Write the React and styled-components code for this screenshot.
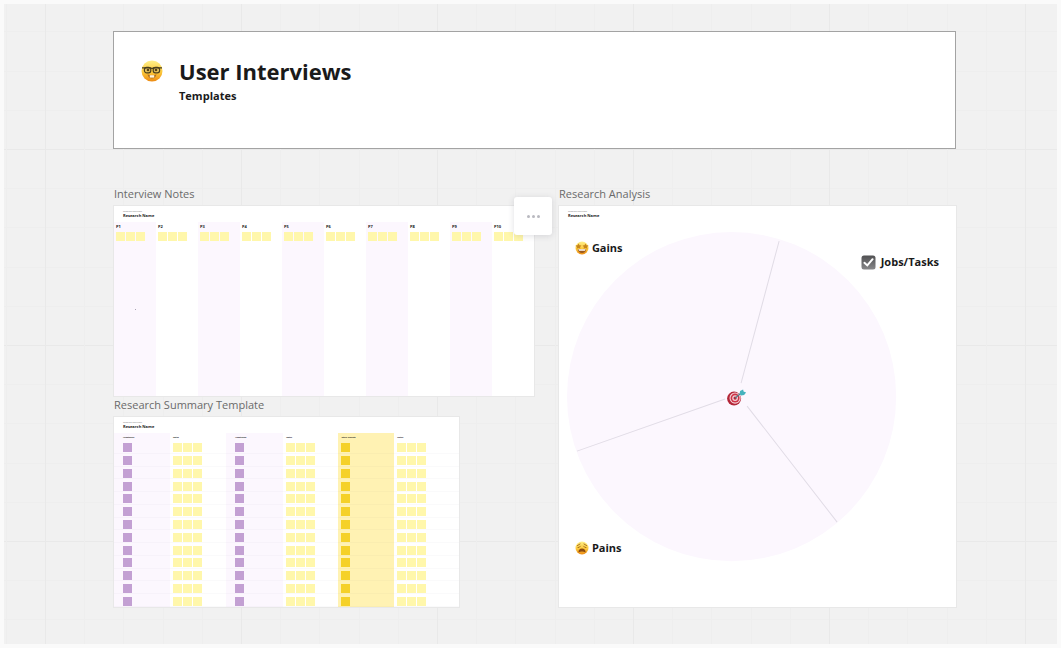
import React from "react";
import styled, { createGlobalStyle } from "styled-components";

const GlobalStyle = createGlobalStyle`
  * { box-sizing: border-box; }
  body {
    margin: 0;
    background: #fafafa;
    color: #1a1a1a;
    font-family: "Open Sans", "Noto Sans", sans-serif;
  }
`;

const major = "#e9e9e9";
const minor = "#eeeeee";
const gridStops = `${major} 0 1px, transparent 1px 39px, ${minor} 39px 40px, transparent 40px 78px, ${minor} 78px 79px, transparent 79px 118px, ${minor} 118px 119px, transparent 119px 157px, ${minor} 157px 158px, transparent 158px`;

const Board = styled.main`
  min-height: calc(100vh - 8px);
  margin: 4px;
  padding: 27px 101px 37px 109px;
  background-color: #f1f1f1;
  background-image:
    linear-gradient(to right, ${gridStops}),
    linear-gradient(to bottom, ${gridStops});
  background-size: 196px 196px;
  background-position: 41px 145px;
`;

const Banner = styled.header`
  display: flex;
  gap: 16px;
  min-height: 118px;
  padding: 24px 27px;
  background: #fff;
  border: 1px solid #a3a3a3;
`;

const BannerText = styled.div`
  display: flex;
  flex-direction: column;
`;

const Title = styled.h1`
  margin: 0;
  font-size: 22px;
  line-height: 30px;
  font-weight: 700;
`;

const Subtitle = styled.p`
  margin: 0;
  font-size: 11px;
  line-height: 20px;
  font-weight: 700;
`;

const BannerIcon = styled.span`
  display: flex;
  align-items: center;
  height: 30px;
`;

const Frames = styled.div`
  display: grid;
  grid-template-columns: 420fr 397fr;
  gap: 25px;
  padding: 36px 0 0 1px;
`;

const Column = styled.div`
  display: flex;
  flex-direction: column;
  min-width: 0;
`;

const FrameBlock = styled.section`
  position: relative;
  display: flex;
  flex-direction: column;
  flex-grow: ${(p) => (p.$grow ? 1 : 0)};
  width: ${(p) => p.$width || "100%"};
`;

const FrameTitle = styled.h2`
  margin: 0;
  font-size: 11px;
  line-height: 18px;
  padding-bottom: 3px;
  font-weight: 400;
  color: #6a6a6a;
`;

const Frame = styled.div`
  position: relative;
  display: flex;
  flex-direction: column;
  flex-grow: 1;
  background: #fff;
  box-shadow: 0 0 0 1px #e8e8e8;
`;

const FrameHead = styled.div`
  height: 16px;
  padding: 4px 9px 0;
`;

const Kicker = styled.p`
  margin: 0;
  font-size: 2px;
  line-height: 3px;
  color: #777;
`;

const ResearchName = styled.p`
  margin: 0;
  font-size: 4px;
  line-height: 5px;
  font-weight: 700;
`;

const Participants = styled.ul`
  display: grid;
  grid-template-columns: repeat(10, 1fr);
  flex-grow: 1;
  min-height: 174px;
  margin: 0;
  padding: 0;
  list-style: none;
`;

const Participant = styled.li`
  padding: 2px 2px 0;
  &:nth-child(odd) { background: #fcf7fe; }
`;

const ParticipantName = styled.h3`
  margin: 0 0 3px;
  font-size: 4px;
  line-height: 5px;
  font-weight: 700;
`;

const Stickies = styled.div`
  display: flex;
  gap: 1px;
`;

const noteColors = { pale: "#fff7ab", purple: "#c3a0d3", gold: "#f5d128" };

const Sticky = styled.span`
  display: block;
  width: 9px;
  height: 9px;
  background: ${(p) => noteColors[p.$tone]};
`;

const bandColors = { purple: "#fcf7fe", pale: "#ffffff", gold: "#fff2b3" };

const SummaryTable = styled.table`
  width: 100%;
  height: 174px;
  table-layout: fixed;
  border-collapse: collapse;
`;

const HeadCell = styled.th`
  width: ${(p) => p.$share};
  height: 8px;
  padding: 1px 0 0 ${(p) => p.$inset};
  background: ${(p) => bandColors[p.$tone]};
  text-align: left;
  font-size: 2px;
  line-height: 5px;
  font-weight: 700;
`;

const NoteCell = styled.td`
  padding: 1px 0 0 ${(p) => p.$inset};
  background: ${(p) => bandColors[p.$tone]};
  box-shadow: inset 0 -1px rgba(60, 60, 90, 0.025);
  vertical-align: middle;
`;

const Canvas = styled.div`
  position: relative;
  flex-grow: 1;
  padding: 10px 8px 45px;
`;

const Wheel = styled.svg`
  display: block;
  width: 86.4%;
  overflow: visible;
`;

const Pin = styled.div`
  position: absolute;
  top: ${(p) => p.$top};
  left: ${(p) => p.$left};
  display: flex;
  align-items: center;
  gap: ${(p) => p.$gap || "3px"};
  font-size: 11px;
  line-height: 16px;
  font-weight: 700;
  white-space: nowrap;
`;

const MenuButton = styled.button`
  position: absolute;
  top: 12px;
  right: -18px;
  display: flex;
  align-items: center;
  justify-content: center;
  gap: 2px;
  width: 38px;
  height: 38px;
  padding: 0;
  background: #fff;
  border: 0;
  border-radius: 3px;
  box-shadow: 0 1px 6px rgba(60, 60, 80, 0.16);
  cursor: pointer;
`;

const Dot = styled.span`
  width: 3px;
  height: 3px;
  border-radius: 50%;
  background: #b9b9c0;
`;

const Speck = styled.span`
  position: absolute;
  top: 54%;
  left: 5%;
  width: 1px;
  height: 1px;
  background: #a9a4b4;
`;

function FaceFill({ id }) {
  return (
    <defs>
      <linearGradient id={id} x1="0" y1="0" x2="0" y2="1">
        <stop offset="0" stopColor="#fff08a" />
        <stop offset="0.55" stopColor="#fcc93c" />
        <stop offset="1" stopColor="#ec8a12" />
      </linearGradient>
    </defs>
  );
}

function NerdFace() {
  return (
    <svg width="22" height="22" viewBox="0 0 22 22" role="img" aria-label="Nerd face">
      <FaceFill id="nerd" />
      <circle cx="11" cy="11" r="10.5" fill="url(#nerd)" />
      <path d="M6.4 14.2Q11 16.4 15.6 14.2Q14.6 18.4 11 18.4T6.4 14.2Z" fill="#b5701c" />
      <path d="M8.8 15.2h4.4v2.4H8.8z" fill="#fff6dc" />
      <rect x="3.400" y="7.400" width="6.400" height="5.400" rx="2.300" fill="#e9c65c" stroke="#4a3f1e" strokeWidth="1.200" />
      <rect x="12.200" y="7.400" width="6.400" height="5.400" rx="2.300" fill="#e9c65c" stroke="#4a3f1e" strokeWidth="1.200" />
      <path d="M1 7.800H9.400L11 8.600 12.600 7.800H21" fill="none" stroke="#4a3f1e" strokeWidth="1.300" />
      <circle cx="7" cy="10" r="1.300" fill="#5c4314" />
      <circle cx="15" cy="10" r="1.300" fill="#5c4314" />
    </svg>
  );
}

function StarFace() {
  return (
    <svg width="14" height="14" viewBox="0 0 14 14" role="img" aria-label="Star-struck face">
      <FaceFill id="star" />
      <circle cx="7" cy="7" r="6.5" fill="url(#star)" />
      <path d="M2.8 8.2h8.4Q10.6 12 7 12T2.8 8.2Z" fill="#9c5a1c" />
      <path d="M3.4 8.3h7.2l-.6 1.5H4Z" fill="#fff" />
      <path d="M3.6 2.6 4.5 4.3 6.5 4.6 5.1 6 5.4 7.8 3.6 7 1.6 7.8 2 6 .5 4.6 2.6 4.3ZM10.4 2.6 11.4 4.3 13.5 4.6 12 6 12.4 7.8 10.4 7 8.6 7.8 8.9 6 7.5 4.6 9.5 4.3Z" fill="#c6861c" />
    </svg>
  );
}

function WearyFace() {
  return (
    <svg width="14" height="14" viewBox="0 0 14 14" role="img" aria-label="Weary face">
      <FaceFill id="weary" />
      <circle cx="7" cy="7" r="6.5" fill="url(#weary)" />
      <path d="M3.4 11.4Q3.6 7.6 7 7.6T10.6 11.4Q7 9.6 3.4 11.4Z" fill="#8a4a12" />
      <path d="M2.4 4.6 5 3M11.6 4.6 9 3M3 6.6Q4.4 7 5.4 5.2M11 6.6Q9.6 7 8.6 5.2" fill="none" stroke="#9d6418" strokeWidth=".9" strokeLinecap="round" />
    </svg>
  );
}

function CheckMark() {
  return (
    <svg width="15" height="15" viewBox="0 0 15 15" role="img" aria-label="Check mark">
      <defs>
        <linearGradient id="check" x1="0" y1="0" x2="0" y2="1">
          <stop offset="0" stopColor="#505052" />
          <stop offset="1" stopColor="#88888a" />
        </linearGradient>
      </defs>
      <rect x=".5" y=".5" width="14" height="14" rx="2.5" fill="url(#check)" />
      <path d="M3.4 7.8 6.3 10.4 11.6 4.2" fill="none" stroke="#fff" strokeWidth="2" strokeLinecap="round" />
    </svg>
  );
}

const steps = Array.from({ length: 13 }, (_, i) => i);
const participants = Array.from({ length: 10 }, (_, i) => `P${i + 1}`);

const summaryColumns = [
  { label: "Hypothesis", tone: "purple", count: 1, share: "16.2%", inset: "9px" },
  { label: "Notes", tone: "pale", count: 3, share: "16.3%", inset: "3px" },
  { label: "Hypothesis", tone: "purple", count: 1, share: "16.5%", inset: "9px" },
  { label: "Notes", tone: "pale", count: 3, share: "16%", inset: "3px" },
  { label: "Other insights", tone: "gold", count: 1, share: "16.2%", inset: "3px" },
  { label: "Notes", tone: "pale", count: 3, share: "18.8%", inset: "3px" },
];

function StickyRow({ tone, count }) {
  return (
    <Stickies>
      {steps.slice(0, count).map((n) => (
        <Sticky key={n} $tone={tone} />
      ))}
    </Stickies>
  );
}

function Heading() {
  return (
    <FrameHead>
      <Kicker>Template Interviews</Kicker>
      <ResearchName>Research Name</ResearchName>
    </FrameHead>
  );
}

function InterviewNotes() {
  return (
    <FrameBlock>
      <FrameTitle>Interview Notes</FrameTitle>
      <Frame>
        <Heading />
        <Participants>
          {participants.map((name) => (
            <Participant key={name}>
              <ParticipantName>{name}</ParticipantName>
              <StickyRow tone="pale" count={3} />
            </Participant>
          ))}
        </Participants>
        <Speck />
      </Frame>
      <MenuButton type="button" aria-label="More options">
        <Dot />
        <Dot />
        <Dot />
      </MenuButton>
    </FrameBlock>
  );
}

function ResearchSummary() {
  return (
    <FrameBlock $width="82.2%">
      <FrameTitle>Research Summary Template</FrameTitle>
      <Frame>
        <Heading />
        <SummaryTable>
          <thead>
            <tr>
              {summaryColumns.map((c, i) => (
                <HeadCell key={i} scope="col" $tone={c.tone} $share={c.share} $inset={c.inset}>
                  {c.label}
                </HeadCell>
              ))}
            </tr>
          </thead>
          <tbody>
            {steps.map((row) => (
              <tr key={row}>
                {summaryColumns.map((c, i) => (
                  <NoteCell key={i} $tone={c.tone} $inset={c.inset}>
                    <StickyRow tone={c.tone} count={c.count} />
                  </NoteCell>
                ))}
              </tr>
            ))}
          </tbody>
        </SummaryTable>
      </Frame>
    </FrameBlock>
  );
}

function ResearchAnalysis() {
  return (
    <FrameBlock $grow>
      <FrameTitle>Research Analysis</FrameTitle>
      <Frame>
        <Heading />
        <Canvas>
          <Wheel viewBox="0 0 329 329" role="img" aria-label="Wheel with three segments and a target">
            <circle cx="164.5" cy="164.5" r="164.5" fill="#fcf7fe" />
            <path d="M212 9 174 151M10 219 158 167M180 174 270 290" fill="none" stroke="#e1dce6" />
            <circle cx="167" cy="166.5" r="7" fill="#b32638" />
            <circle cx="168" cy="166" r="5.6" fill="#f3d3d8" />
            <circle cx="168" cy="166" r="4.5" fill="#cf3347" />
            <circle cx="168" cy="166" r="2.9" fill="#f3d3d8" />
            <circle cx="168" cy="166" r="1.6" fill="#b32638" />
            <path d="M168 166 174 161" stroke="#4b7f8a" strokeWidth="1.2" />
            <path d="M172.5 162 173 159 176 157.5 176.5 159.5 179 160.5 177 163 174 163.5Z" fill="#45b3bd" />
          </Wheel>
          <Pin $top="18px" $left="4%">
            <StarFace />
            Gains
          </Pin>
          <Pin $top="32px" $left="76%" $gap="5px">
            <CheckMark />
            Jobs/Tasks
          </Pin>
          <Pin $top="318px" $left="4%">
            <WearyFace />
            Pains
          </Pin>
        </Canvas>
      </Frame>
    </FrameBlock>
  );
}

export default function App() {
  return (
    <>
      <GlobalStyle />
      <Board>
        <Banner>
          <BannerIcon>
            <NerdFace />
          </BannerIcon>
          <BannerText>
            <Title>User Interviews</Title>
            <Subtitle>Templates</Subtitle>
          </BannerText>
        </Banner>
        <Frames>
          <Column>
            <InterviewNotes />
            <ResearchSummary />
          </Column>
          <Column>
            <ResearchAnalysis />
          </Column>
        </Frames>
      </Board>
    </>
  );
}
